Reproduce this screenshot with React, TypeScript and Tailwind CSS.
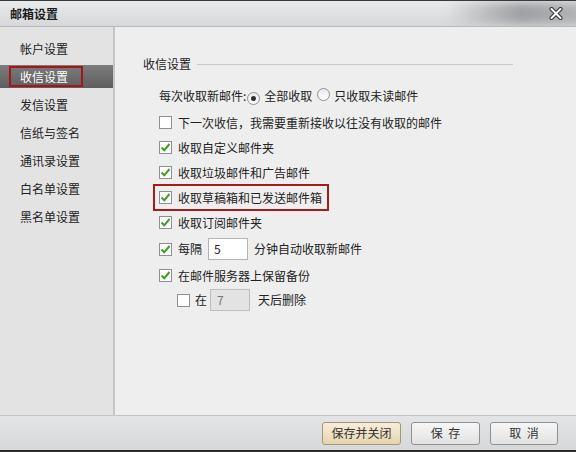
const navItems = ["帐户设置", "收信设置", "发信设置", "信纸与签名", "通讯录设置", "白名单设置", "黑名单设置"];

const CheckBox = ({ checked }: { checked: boolean }) => (
  <span className="relative inline-flex h-[13px] w-[13px] shrink-0 items-center justify-center border border-[#8f9091] bg-white">
    {checked && (
      <svg width="11" height="11" viewBox="0 0 11 11">
        <path d="M1.5 5.5 L4.3 8.3 L9.5 2" fill="none" stroke="#3c9e22" strokeWidth="2" />
      </svg>
    )}
  </span>
);

const Radio = ({ checked }: { checked: boolean }) => (
  <span className="inline-flex h-[13px] w-[13px] shrink-0 items-center justify-center rounded-full border border-[#8f9091] bg-gradient-to-b from-[#e9e9e9] to-white">
    {checked && <span className="h-[5px] w-[5px] rounded-full bg-[#2c2c2c]" />}
  </span>
);

const CheckRow = ({ label, checked = true }: { label: string; checked?: boolean }) => (
  <div className="flex h-[25px] items-center">
    <CheckBox checked={checked} />
    <span className="ml-[6px]">{label}</span>
  </div>
);

export default function App() {
  return (
    <div className="flex h-[452px] w-[576px] flex-col overflow-hidden bg-[#eeeeee] font-['Noto_Sans_CJK_SC',sans-serif] text-[12px] leading-[16px] text-[#222]">
      {/* title bar */}
      <div className="relative flex h-[27px] shrink-0 items-center overflow-hidden border-t border-b border-t-[#3a3a3a] border-b-[#b9b9bb] bg-gradient-to-b from-[#e9eaec] to-[#d7d8da] pl-[10px]">
        <span className="font-bold text-[#1c1c1c]">邮箱设置</span>
        <div className="absolute right-[-20px] top-[1px] h-[22px] w-[150px] rounded-full bg-gradient-to-r from-transparent via-[#8d8f92]/80 to-[#a7a9ac]/70 blur-[5px]" />
        <svg className="absolute right-[13px] top-[6px]" width="14" height="13" viewBox="0 0 14 13">
          <path d="M2.5 2 L11.5 11 M11.5 2 L2.5 11" stroke="#333" strokeWidth="4" strokeLinecap="round" />
          <path d="M2.5 2 L11.5 11 M11.5 2 L2.5 11" stroke="#fff" strokeWidth="2" strokeLinecap="round" />
        </svg>
      </div>

      {/* body */}
      <div className="flex min-h-0 flex-1">
        <div className="w-[115px] shrink-0 border-r-2 border-[#c6c6c6] bg-[#e3e3e3] pt-[10px]">
          {navItems.map((item, i) =>
            i === 1 ? (
              <div key={item} className="mb-[5px] flex h-[23px] items-center bg-gradient-to-b from-[#7c7c7c] to-[#5e5e5e] pl-[9px]">
                <div className="flex h-[21px] w-[74px] items-center border-2 border-[#a4161a] pl-[9px] text-white">{item}</div>
              </div>
            ) : (
              <div key={item} className="mb-[5px] flex h-[23px] items-center pl-[20px] text-[#222]">
                {item}
              </div>
            )
          )}
        </div>

        <div className="flex-1 pl-[28px] pt-[25px]">
          <div className="flex h-[24px] items-center">
            <span>收信设置</span>
            <div className="ml-[6px] h-px w-[316px] bg-[#c9c9c9]" />
          </div>

          <div className="pl-[16px]">
            <div className="mt-[8px] flex h-[24px] items-center">
              <span>每次收取新邮件:</span>
              <span className="ml-[1px]"><Radio checked /></span>
              <span className="ml-[4px]">全部收取</span>
              <span className="ml-[5px]"><Radio checked={false} /></span>
              <span className="ml-[4px]">只收取未读邮件</span>
            </div>

            <div className="mt-[2px]">
              <CheckRow label="下一次收信，我需要重新接收以往没有收取的邮件" checked={false} />
              <CheckRow label="收取自定义邮件夹" />
              <CheckRow label="收取垃圾邮件和广告邮件" />
              <div className="-my-px ml-[-6px] flex h-[27px] w-fit items-center border-2 border-[#a51c1c] pl-[4px] pr-[5px]">
                <CheckBox checked />
                <span className="ml-[6px]">收取草稿箱和已发送邮件箱</span>
              </div>
              <CheckRow label="收取订阅邮件夹" />
              <div className="flex h-[28px] items-center">
                <CheckBox checked />
                <span className="ml-[6px]">每隔</span>
                <div className="ml-[6px] flex h-[22px] w-[40px] items-center border border-[#b3b3b3] bg-white pl-[5px]">5</div>
                <span className="ml-[6px]">分钟自动收取新邮件</span>
              </div>
              <CheckRow label="在邮件服务器上保留备份" />
              <div className="flex h-[24px] items-center pl-[18px]">
                <CheckBox checked={false} />
                <span className="ml-[5px]">在</span>
                <div className="ml-[3px] flex h-[22px] w-[40px] items-center border border-[#bdbdbd] bg-[#e3e3e3] pl-[6px] text-[#777]">7</div>
                <span className="ml-[8px]">天后删除</span>
              </div>
            </div>
          </div>
        </div>
      </div>

      {/* footer */}
      <div className="flex h-[37px] shrink-0 items-center justify-end gap-[10px] border-t border-b-2 border-t-[#c3c4c6] border-b-[#2a2a2a] bg-gradient-to-b from-[#e3e4e6] to-[#d7d8da] pr-[18px]">
        <button className="h-[23px] w-[79px] rounded-[3px] border border-[#a69674] bg-gradient-to-b from-[#f7eedb] to-[#e6d4ad] text-[12px] text-[#333]">
          保存并关闭
        </button>
        <button className="h-[23px] w-[69px] rounded-[3px] border border-[#8e9092] bg-gradient-to-b from-[#f6f6f6] to-[#e2e2e3] text-[12px] text-[#333]">
          保&nbsp;&nbsp;存
        </button>
        <button className="h-[23px] w-[68px] rounded-[3px] border border-[#8e9092] bg-gradient-to-b from-[#f6f6f6] to-[#e2e2e3] text-[12px] text-[#333]">
          取&nbsp;&nbsp;消
        </button>
      </div>
    </div>
  );
}
